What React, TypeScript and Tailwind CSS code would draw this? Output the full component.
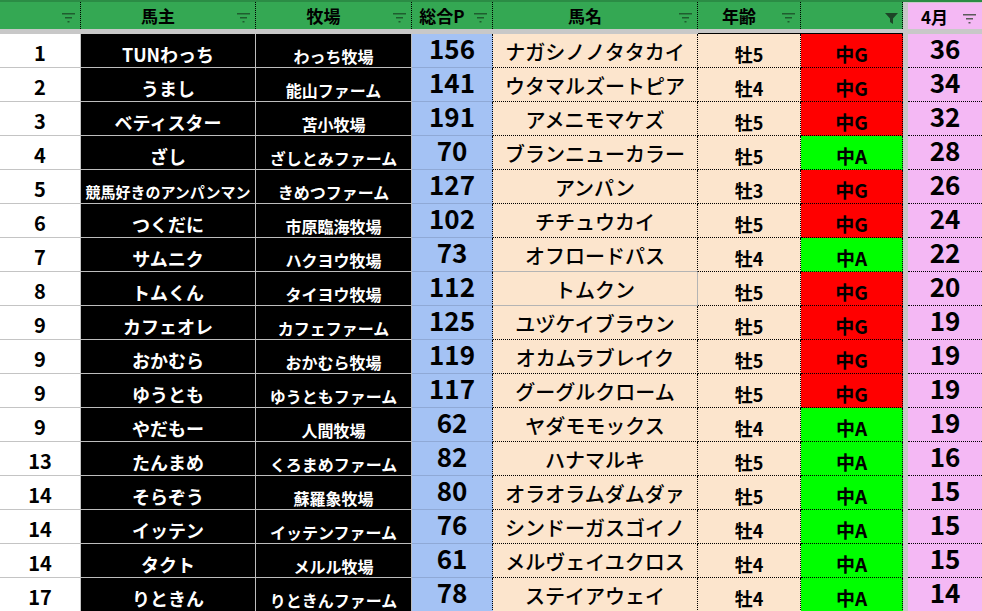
import React from "react";

type Row = {
  rank: string;
  owner: string;
  farm: string;
  pt: number;
  horse: string;
  age: string;
  cls: "G" | "A";
  apr: number;
};

const ROWS: Row[] = [
  { rank: "1", owner: "TUNわっち", farm: "わっち牧場", pt: 156, horse: "ナガシノノタタカイ", age: "牡5", cls: "G", apr: 36 },
  { rank: "2", owner: "うまし", farm: "能山ファーム", pt: 141, horse: "ウタマルズートピア", age: "牡4", cls: "G", apr: 34 },
  { rank: "3", owner: "ベティスター", farm: "苫小牧場", pt: 191, horse: "アメニモマケズ", age: "牡5", cls: "G", apr: 32 },
  { rank: "4", owner: "ざし", farm: "ざしとみファーム", pt: 70, horse: "ブランニューカラー", age: "牡5", cls: "A", apr: 28 },
  { rank: "5", owner: "競馬好きのアンパンマン", farm: "きめつファーム", pt: 127, horse: "アンパン", age: "牡3", cls: "G", apr: 26 },
  { rank: "6", owner: "つくだに", farm: "市原臨海牧場", pt: 102, horse: "チチュウカイ", age: "牡5", cls: "G", apr: 24 },
  { rank: "7", owner: "サムニク", farm: "ハクヨウ牧場", pt: 73, horse: "オフロードパス", age: "牡4", cls: "A", apr: 22 },
  { rank: "8", owner: "トムくん", farm: "タイヨウ牧場", pt: 112, horse: "トムクン", age: "牡5", cls: "G", apr: 20 },
  { rank: "9", owner: "カフェオレ", farm: "カフェファーム", pt: 125, horse: "ユヅケイブラウン", age: "牡5", cls: "G", apr: 19 },
  { rank: "9", owner: "おかむら", farm: "おかむら牧場", pt: 119, horse: "オカムラブレイク", age: "牡5", cls: "G", apr: 19 },
  { rank: "9", owner: "ゆうとも", farm: "ゆうともファーム", pt: 117, horse: "グーグルクローム", age: "牡5", cls: "G", apr: 19 },
  { rank: "9", owner: "やだもー", farm: "人間牧場", pt: 62, horse: "ヤダモモックス", age: "牡4", cls: "A", apr: 19 },
  { rank: "13", owner: "たんまめ", farm: "くろまめファーム", pt: 82, horse: "ハナマルキ", age: "牡5", cls: "A", apr: 16 },
  { rank: "14", owner: "そらぞう", farm: "蘇羅象牧場", pt: 80, horse: "オラオラムダムダァ", age: "牡5", cls: "A", apr: 15 },
  { rank: "14", owner: "イッテン", farm: "イッテンファーム", pt: 76, horse: "シンドーガスゴイノ", age: "牡4", cls: "A", apr: 15 },
  { rank: "14", owner: "タクト", farm: "メルル牧場", pt: 61, horse: "メルヴェイユクロス", age: "牡4", cls: "A", apr: 15 },
  { rank: "17", owner: "りときん", farm: "りときんファーム", pt: 78, horse: "ステイアウェイ", age: "牡4", cls: "A", apr: 14 },
];

function FilterIcon({ color = "#1f5c2f" }: { color?: string }) {
  return (
    <svg width="14" height="10" viewBox="0 0 14 10">
      <rect x="0" y="0" width="13" height="1.5" fill={color} />
      <rect x="3" y="4" width="7" height="1.5" fill={color} />
      <rect x="5.5" y="8" width="2" height="1.5" fill={color} />
    </svg>
  );
}

function FunnelIcon() {
  return (
    <svg width="13" height="11" viewBox="0 0 13 11">
      <path d="M0 0 H13 L8 5.5 V11 L5 9 V5.5 Z" fill="#1d4527" />
    </svg>
  );
}

function HeadCell({
  w,
  label,
  active,
  pink,
}: {
  w: string;
  label?: string;
  active?: boolean;
  pink?: boolean;
}) {
  return (
    <div
      className={`${w} flex h-full items-center border-r border-dotted ${
        pink ? "border-r-transparent bg-[#f4b8f4] border-t border-t-[#c8c8c8] [border-top-style:solid]" : "border-r-black"
      }`}
    >
      <span className="flex-1 text-center text-[17px] font-bold leading-none text-black">{label}</span>
      <span className="flex w-[20px] shrink-0 justify-end pr-[4px] pt-[5px]">
        {active ? <FunnelIcon /> : <FilterIcon color={pink ? "#5a5a5a" : "#1f5c2f"} />}
      </span>
    </div>
  );
}

const cell = "flex h-full items-end justify-center whitespace-nowrap leading-none";

export default function App() {
  return (
    <div className="h-[611px] w-[982px] overflow-hidden bg-white font-['Noto_Sans_CJK_JP',sans-serif]">
      {/* header */}
      <div className="flex h-[29px] border-t-2 border-[#2b8c45] bg-[#34a853]">
        <HeadCell w="w-[81px]" />
        <HeadCell w="w-[175px]" label="馬主" />
        <HeadCell w="w-[156px]" label="牧場" />
        <HeadCell w="w-[81px]" label="総合P" />
        <HeadCell w="w-[205px]" label="馬名" />
        <HeadCell w="w-[103px]" label="年齢" />
        <HeadCell w="w-[102px]" active />
        <div className="h-full w-[5px] bg-[#c8c8c8]" />
        <HeadCell w="w-[74px]" label="4月" pink />
      </div>
      <div className="flex h-[5px] bg-[#c8c8c8]">
        <div className="w-[698px]" />
        <div className="mt-auto h-px w-[205px] bg-black" />
      </div>

      {ROWS.map((r, i) => {
        const selTop = i === 6;
        const sel = i === 7;
        return (
          <div key={i} className="flex h-[34px]">
            <div className={`${cell} w-[81px] border-r border-b border-[#c4c4c4] pb-[4px] text-[20px] font-bold text-black`}>
              {r.rank}
            </div>
            <div
              className={`${cell} w-[175px] border-r border-b border-[#bdbdbd] bg-black pb-[4px] font-bold text-white ${
                r.owner.length > 8 ? "text-[15px]" : "text-[18px]"
              }`}
            >
              {r.owner}
            </div>
            <div className={`${cell} w-[156px] border-r border-b border-[#bdbdbd] bg-black pb-[3px] text-[16px] font-bold text-white`}>
              {r.farm}
            </div>
            <div
              className={`${cell} w-[81px] border-r border-b border-r-black border-b-[#8fa9d6] bg-[#a4c2f4] pb-[6px] text-[26px] font-bold text-black [border-right-style:dotted]`}
            >
              {r.pt}
            </div>
            <div
              className={`${cell} w-[205px] border-r border-b bg-[#fce5cd] pb-[5px] text-[20px] font-medium text-black ${
                sel
                  ? "border-[#b4b4b4]"
                  : selTop
                  ? "border-r-black border-b-[#b4b4b4] [border-right-style:dotted]"
                  : "border-dotted border-black"
              }`}
            >
              {r.horse}
            </div>
            <div className={`${cell} w-[103px] border-r border-b border-dotted border-black bg-[#fce5cd] pb-[4px] text-[18px] font-bold text-black`}>
              {r.age}
            </div>
            <div
              className={`${cell} w-[102px] border-r border-b border-dotted border-black pb-[4px] text-[19px] font-bold text-black ${
                r.cls === "G" ? "bg-[#ff0000]" : "bg-[#00ff00]"
              }`}
            >
              中{r.cls}
            </div>
            <div className="h-full w-[5px] bg-[#c8c8c8]" />
            <div className={`${cell} w-[74px] border-b border-dotted border-black bg-[#f4b8f4] pb-[6px] text-[26px] font-bold text-black`}>
              {r.apr}
            </div>
          </div>
        );
      })}
    </div>
  );
}
